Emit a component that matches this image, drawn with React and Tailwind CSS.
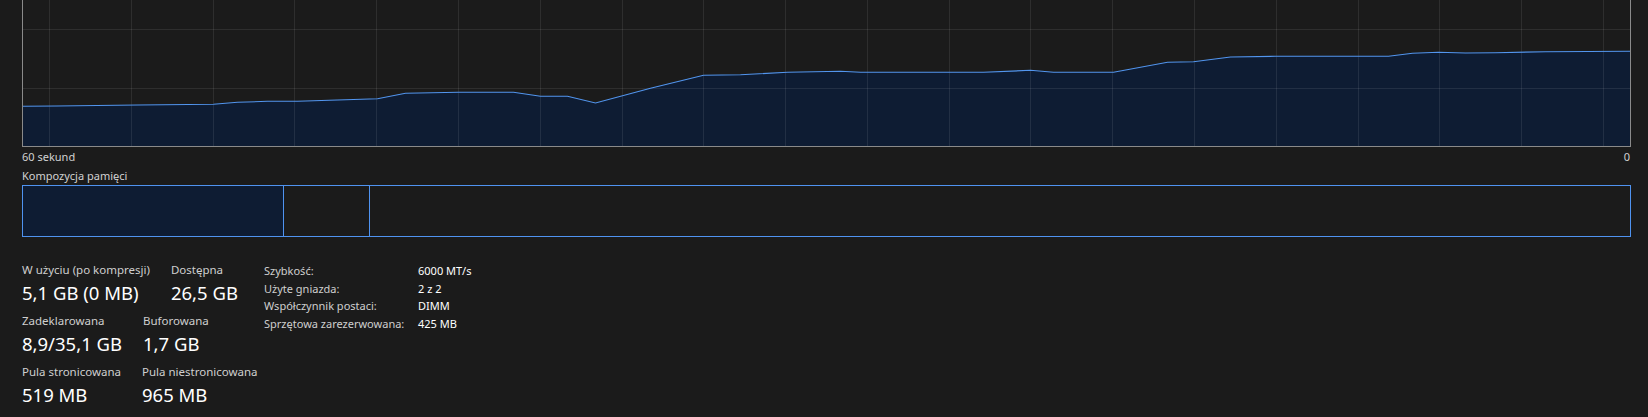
import React from "react";

// Memory usage history, sampled points in chart-local pixels
const usage = [
  [0, 106.3], [34, 106], [115, 105], [191, 104.3], [215, 102.3], [245, 101.3],
  [275, 101.3], [355, 98.7], [383, 93.3], [436, 92.3], [491, 92.3], [518, 96.3],
  [545, 96.3], [573, 103], [628, 88.3], [681, 75.3], [718, 74.7], [765, 72.3],
  [818, 71.3], [838, 72.3], [961, 72.3], [1008, 70.3], [1031, 72.3], [1091, 72.3],
  [1145, 62.3], [1171, 61.7], [1208, 57], [1253, 56.3], [1366, 56.3], [1390, 53.3],
  [1416, 52.3], [1443, 53], [1473, 52.7], [1523, 51.7], [1608, 51.3],
];

const W = 1609;
const H = 147;
const BOTTOM = 146.5;

function MemoryChart() {
  const line = usage.map(([x, y]) => `${x + 0.5},${y}`).join(" ");
  const area = `0.5,${BOTTOM} ${line} 1608.5,${BOTTOM}`;
  const vLines = Array.from({ length: 20 }, (_, i) => Math.round(27 + i * 81.79) + 0.5);
  const hLines = [29.5, 88.5];
  return (
    <svg width={W} height={H} viewBox={`0 0 ${W} ${H}`} className="block">
      <polygon points={area} fill="#0e1c33" />
      {vLines.map((x) => (
        <line key={x} x1={x} y1={0} x2={x} y2={146} stroke="rgba(255,255,255,0.085)" strokeWidth="1" />
      ))}
      {hLines.map((y) => (
        <line key={y} x1={0} y1={y} x2={1608} y2={y} stroke="rgba(255,255,255,0.085)" strokeWidth="1" />
      ))}
      <polyline points={line} fill="none" stroke="#5295ee" strokeWidth="1.1" />
      <line x1="0.5" y1="0" x2="0.5" y2="147" stroke="#8a8a8a" strokeWidth="1" />
      <line x1="1608.5" y1="0" x2="1608.5" y2="147" stroke="#8a8a8a" strokeWidth="1" />
      <line x1="0" y1={BOTTOM} x2="1609" y2={BOTTOM} stroke="#8a8a8a" strokeWidth="1" />
    </svg>
  );
}

function Stat({ label, value }) {
  return (
    <div className="flex flex-col">
      <span className="text-[11.5px] leading-[16px] text-[#cfcfcf] whitespace-nowrap">{label}</span>
      <span className="text-[18.5px] leading-[29px] text-white whitespace-nowrap">{value}</span>
    </div>
  );
}

const hardware = [
  ["Szybkość:", "6000 MT/s"],
  ["Użyte gniazda:", "2 z 2"],
  ["Współczynnik postaci:", "DIMM"],
  ["Sprzętowa zarezerwowana:", "425 MB"],
];

export default function App() {
  return (
    <div
      className="w-[1648px] h-[417px] overflow-hidden bg-[#1b1b1b] pl-[22px] pr-[18px]"
      style={{ fontFamily: '"Noto Sans", "Open Sans", sans-serif' }}
    >
      <MemoryChart />

      <div className="flex justify-between text-[11px] leading-[15px] text-[#d2d2d2] mt-[2px]">
        <span>60 sekund</span>
        <span>0</span>
      </div>

      <div className="text-[11px] leading-[15px] text-[#d2d2d2] mt-[4px]">Kompozycja pamięci</div>

      <div className="mt-[2px] h-[52px] w-[1609px] border border-[#4f93f0] flex">
        <div className="w-[261px] bg-[#0e1c33] border-r border-[#4f93f0]" />
        <div className="w-[86px] border-r border-[#4f93f0]" />
        <div className="flex-1" />
      </div>

      <div className="flex items-start mt-[25px]">
        <div className="w-[242px] flex flex-col gap-[6px]">
          <div className="flex gap-[21px]">
            <Stat label="W użyciu (po kompresji)" value="5,1 GB (0 MB)" />
            <Stat label="Dostępna" value="26,5 GB" />
          </div>
          <div className="flex gap-[21px]">
            <Stat label="Zadeklarowana" value="8,9/35,1 GB" />
            <Stat label="Buforowana" value="1,7 GB" />
          </div>
          <div className="flex gap-[21px]">
            <Stat label="Pula stronicowana" value="519 MB" />
            <Stat label="Pula niestronicowana" value="965 MB" />
          </div>
        </div>

        <div className="grid grid-cols-[154px_auto] content-start text-[11px] leading-[17.7px]">
          {hardware.map(([k, v]) => (
            <React.Fragment key={k}>
              <span className="text-[#cfcfcf] whitespace-nowrap">{k}</span>
              <span className="text-white whitespace-nowrap">{v}</span>
            </React.Fragment>
          ))}
        </div>
      </div>
    </div>
  );
}
